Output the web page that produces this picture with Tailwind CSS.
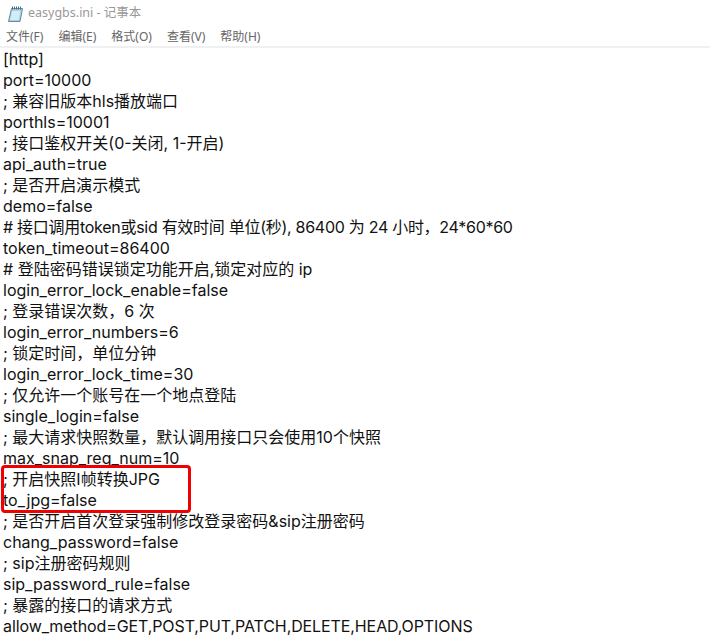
<!DOCTYPE html>
<html>
<head>
<meta charset="utf-8">
<script src="https://cdn.jsdelivr.net/npm/@tailwindcss/browser@4"></script>
</head>
<body class="w-[710px] h-[638px] overflow-hidden bg-white font-['Inter','Noto_Sans_CJK_SC',sans-serif]">
<div class="flex items-center h-[27px] pl-[7px] gap-[4px] text-[12.5px] text-[#999] font-['Noto_Sans','Noto_Sans_CJK_SC',sans-serif]">
  <svg width="17" height="18" viewBox="0 0 17 18"><path d="M4.5 3.5h11l-2.5 13h-11.500z" fill="#a9d3e6" stroke="#5f8c9e"/><path d="M5 6h8.500L11.500 15H3.300z" fill="#d5ecf4"/><path d="M5.500 1.500v3M7.500 1.500v3M9.500 1.500v3M11.500 1.500v3M13.500 1.500v3" stroke="#4d6b78"/></svg>
  <span>easygbs.ini - 记事本</span>
</div>
<div class="flex items-center h-[19px] pl-[6px] gap-[15px] text-[12px] text-[#666] font-['Noto_Sans','Noto_Sans_CJK_SC',sans-serif]">
  <span>文件(F)</span><span>编辑(E)</span><span>格式(O)</span><span>查看(V)</span><span>帮助(H)</span>
</div>
<div class="h-[2px] bg-[#f0f0f0]"></div>
<div class="relative pl-[3px] pt-px text-[16px] leading-[21px] text-[#111]">
  <div>[http]</div>
  <div>port=10000</div>
  <div>; 兼容旧版本hls播放端口</div>
  <div>porthls=10001</div>
  <div>; 接口鉴权开关(0-关闭, 1-开启)</div>
  <div>api_auth=true</div>
  <div>; 是否开启演示模式</div>
  <div>demo=false</div>
  <div class="tracking-[-0.28px]"># 接口调用token或sid 有效时间 单位(秒), 86400 为 24 小时，24*60*60</div>
  <div>token_timeout=86400</div>
  <div># 登陆密码错误锁定功能开启,锁定对应的 ip</div>
  <div>login_error_lock_enable=false</div>
  <div>; 登录错误次数，6 次</div>
  <div>login_error_numbers=6</div>
  <div>; 锁定时间，单位分钟</div>
  <div>login_error_lock_time=30</div>
  <div>; 仅允许一个账号在一个地点登陆</div>
  <div>single_login=false</div>
  <div>; 最大请求快照数量，默认调用接口只会使用10个快照</div>
  <div>max_snap_req_num=10</div>
  <div>; 开启快照I帧转换JPG</div>
  <div>to_jpg=false</div>
  <div>; 是否开启首次登录强制修改登录密码&amp;sip注册密码</div>
  <div>chang_password=false</div>
  <div>; sip注册密码规则</div>
  <div>sip_password_rule=false</div>
  <div>; 暴露的接口的请求方式</div>
  <div class="tracking-[-0.1px]">allow_method=GET,POST,PUT,PATCH,DELETE,HEAD,OPTIONS</div>
  <div class="absolute left-[1px] top-[417px] w-[190px] h-[48px] border-[3px] border-[#f00000] rounded-[4px]"></div>
</div>
</body>
</html>
